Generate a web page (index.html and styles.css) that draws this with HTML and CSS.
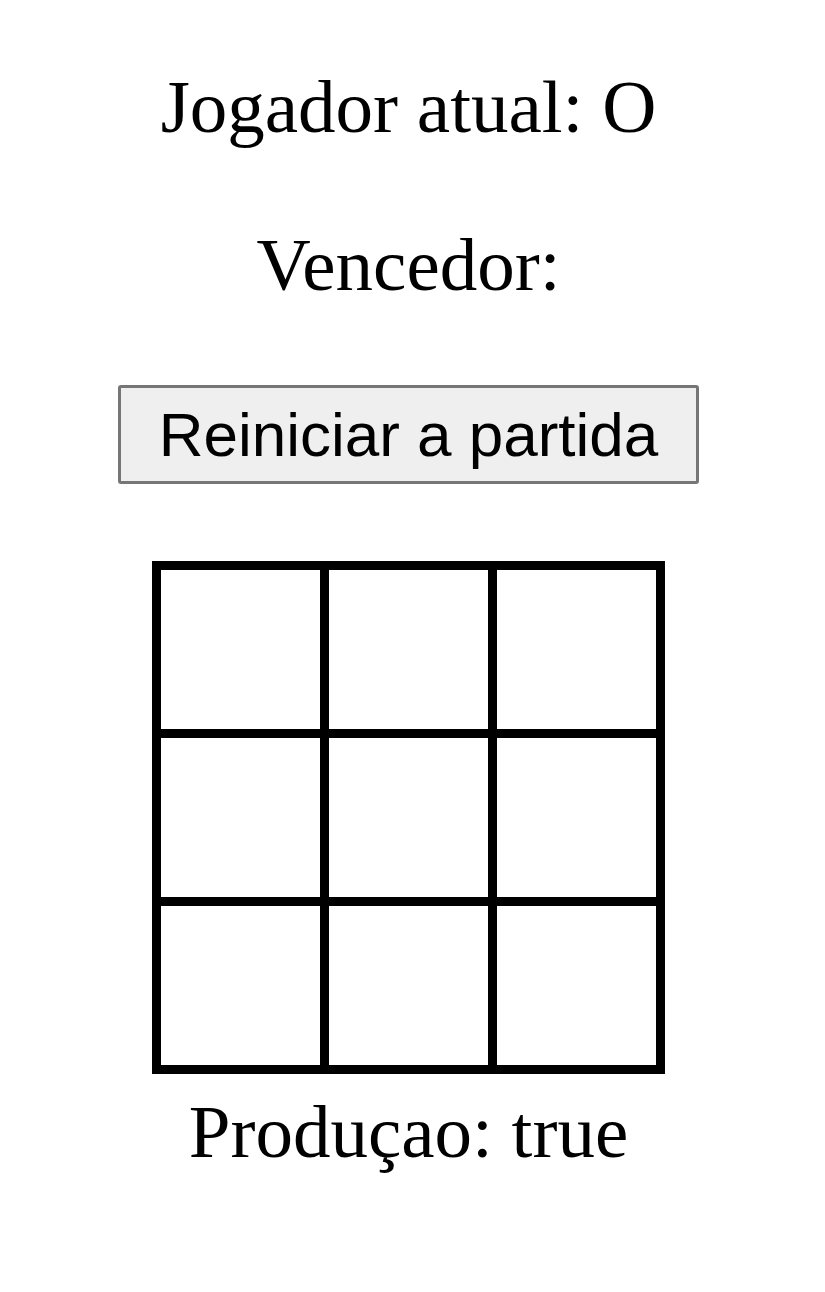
FILE: index.html
```html
<!DOCTYPE html>
<html lang="pt">
<head>
<meta charset="utf-8">
<title>Jogo da velha</title>
<link rel="stylesheet" href="styles.css">
</head>
<body>
<main class="game">
  <p class="status">Jogador atual: O</p>
  <p class="status status--winner">Vencedor: </p>
  <button class="reset" type="button">Reiniciar a partida</button>
  <div class="board">
    <div class="cell"></div><div class="cell"></div><div class="cell"></div>
    <div class="cell"></div><div class="cell"></div><div class="cell"></div>
    <div class="cell"></div><div class="cell"></div><div class="cell"></div>
  </div>
  <p class="status status--env">Produçao: true</p>
</main>
</body>
</html>
```
FILE: styles.css
```css
html, body {
  margin: 0;
  padding: 0;
  background: #ffffff;
}

body {
  padding-right: 8px;
  font-family: "Liberation Serif", "Times New Roman", serif;
  color: #000000;
}

.game {
  display: flex;
  flex-direction: column;
  align-items: center;
  padding-top: 64px;
}

.status {
  margin: 0;
  font-size: 75px;
  line-height: 86px;
}

.status--winner {
  margin-top: 72px;
}

.reset {
  margin-top: 77px;
  font-family: "Liberation Sans", Arial, sans-serif;
  font-size: 62px;
  line-height: 71px;
  padding: 11px 38px;
  color: #000000;
  background: #efefef;
  border: 3px solid #767676;
  border-radius: 3px;
}

.board {
  margin-top: 77px;
  display: grid;
  grid-template-columns: repeat(3, 159px);
  grid-template-rows: repeat(3, 159px);
  gap: 9px;
  padding: 9px;
  background: #000000;
}

.cell {
  background: #ffffff;
}

.status--env {
  margin-top: 15px;
}
```
